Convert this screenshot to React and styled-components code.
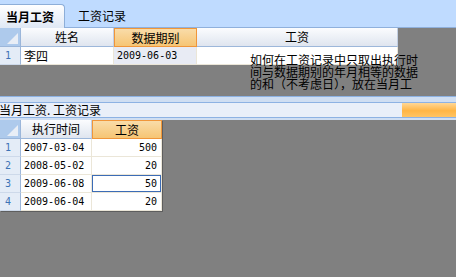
import React from "react";
import styled, { createGlobalStyle, css } from "styled-components";

const Global = createGlobalStyle`
  html, body { margin: 0; padding: 0; background: #808080; }
  body {
    font-family: "Noto Sans CJK SC", "Noto Sans", sans-serif;
    font-size: 12px;
    color: #000;
    width: 456px;
    height: 277px;
    overflow: hidden;
  }
`;

const Page = styled.div`
  position: relative;
  width: 456px;
  height: 277px;
  display: flex;
  flex-direction: column;
`;

const TabBar = styled.div`
  height: 23px;
  padding-top: 4px;
  background: #bfdbff;
  border-bottom: 1px solid #8fb0dc;
  display: flex;
  align-items: flex-end;
`;

const Tab = styled.div`
  height: 23px;
  box-sizing: border-box;
  display: flex;
  align-items: center;
  line-height: 12px;
  white-space: nowrap;
  ${(p) =>
    p.$active
      ? css`
          width: 65px;
          padding-left: 6px;
          font-weight: bold;
          background: linear-gradient(#ffffff, #dfe8f5);
          border: 1px solid #8daed8;
          border-left: none;
          border-bottom: none;
          border-top-right-radius: 4px;
          margin-bottom: -1px;
          height: 24px;
        `
      : css`
          padding-left: 13px;
        `}
`;

const Grid = styled.div`
  display: grid;
  grid-template-columns: ${(p) => p.$cols};
  width: max-content;
  background: #fff;
  ${(p) =>
    p.$shadow &&
    css`
      box-shadow: 1px 1px 0 #5e5e5e;
    `}
`;

const Corner = styled.div`
  height: 19px;
  box-sizing: border-box;
  background: #aecaec;
  border-right: 1px solid #9bb6da;
  border-bottom: 1px solid #9bb6da;
  display: flex;
  align-items: flex-end;
  justify-content: flex-end;
  padding: 0 2px 2px 0;
`;

const HeadCell = styled.div`
  height: 19px;
  box-sizing: border-box;
  display: flex;
  align-items: center;
  justify-content: center;
  line-height: 12px;
  white-space: nowrap;
  ${(p) =>
    p.$active
      ? css`
          background: linear-gradient(#f9dca9, #f6c574);
          border: 1px solid #f0963a;
        `
      : css`
          background: linear-gradient(#fbfcfe, #dfe5ef);
          border-right: 1px solid #c3cfe2;
          border-bottom: 1px solid #9db7da;
        `}
`;

const RowHead = styled.div`
  height: 18px;
  box-sizing: border-box;
  background: #e4ecf7;
  color: #3c73b6;
  border-right: 1px solid #9db7da;
  border-bottom: 1px solid #cdd9ea;
  font-family: "DejaVu Sans Mono", monospace;
  font-size: 10px;
  display: flex;
  align-items: center;
  padding-left: 5px;
`;

const Cell = styled.div`
  height: 18px;
  box-sizing: border-box;
  border-right: 1px solid #ebe6d8;
  border-bottom: 1px solid #ebe6d8;
  display: flex;
  align-items: center;
  white-space: nowrap;
  line-height: 12px;
  padding: 0 4px 0 3px;
  background: ${(p) => (p.$tint ? "#e8ebf4" : "#fff")};
  justify-content: ${(p) => (p.$right ? "flex-end" : "flex-start")};
  ${(p) =>
    p.$mono &&
    css`
      font-family: "DejaVu Sans Mono", monospace;
      font-size: 10px;
    `}
  ${(p) =>
    p.$selected &&
    css`
      box-shadow: inset 0 0 0 1px #3c6cb6;
    `}
`;

const Gap = styled.div`
  height: ${(p) => p.$h}px;
  flex: none;
`;

const SubBar = styled.div`
  border-top: 1px solid #8db2e3;
  background: #cfdef2;
  padding: 5px 0 2px;
`;

const SubPanel = styled.div`
  height: 14px;
  border-top: 1px solid #8db2e3;
  border-bottom: 1px solid #8db2e3;
  background: #e9eff9;
  display: flex;
  align-items: center;
  justify-content: space-between;
`;

const SubTitle = styled.div`
  margin-left: -1px;
  line-height: 12px;
  white-space: nowrap;
`;

const OrangeTab = styled.div`
  width: 54px;
  height: 14px;
  background: linear-gradient(#ffd796, #ffb544 55%, #ffc463);
`;

const Note = styled.div`
  position: absolute;
  left: 250px;
  top: 54px;
  line-height: 12px;
  font-size: 12px;
  color: #000;
`;

const NoteLine = styled.div`
  white-space: nowrap;
  height: 12px;
`;

const CornerMark = () => (
  <svg width="11" height="11" viewBox="0 0 11 11">
    <polygon points="11,0 11,11 0,11" fill="#e9eef6" />
  </svg>
);

const rows2 = [
  ["2007-03-04", "500"],
  ["2008-05-02", "20"],
  ["2009-06-08", "50"],
  ["2009-06-04", "20"],
];

export default function App() {
  return (
    <>
      <Global />
      <Page>
        <TabBar>
          <Tab $active>当月工资</Tab>
          <Tab>工资记录</Tab>
        </TabBar>
        <Grid $cols="21px 93px 83px 201px">
          <Corner>
            <CornerMark />
          </Corner>
          <HeadCell>姓名</HeadCell>
          <HeadCell $active>数据期别</HeadCell>
          <HeadCell>工资</HeadCell>
          <RowHead>1</RowHead>
          <Cell>李四</Cell>
          <Cell $tint $mono>
            2009-06-03
          </Cell>
          <Cell />
        </Grid>
        <Gap $h={31} />
        <SubBar>
          <SubPanel>
            <SubTitle>当月工资. 工资记录</SubTitle>
            <OrangeTab />
          </SubPanel>
        </SubBar>
        <Grid $cols="21px 71px 70px" $shadow>
          <Corner>
            <CornerMark />
          </Corner>
          <HeadCell>执行时间</HeadCell>
          <HeadCell $active>工资</HeadCell>
          {rows2.map(([d, v], i) => (
            <React.Fragment key={i}>
              <RowHead>{i + 1}</RowHead>
              <Cell $mono>{d}</Cell>
              <Cell $mono $right $selected={i === 2}>
                {v}
              </Cell>
            </React.Fragment>
          ))}
        </Grid>
        <Note>
          <NoteLine>如何在工资记录中只取出执行时</NoteLine>
          <NoteLine>间与数据期别的年月相等的数据</NoteLine>
          <NoteLine>的和（不考虑日），放在当月工</NoteLine>
        </Note>
      </Page>
    </>
  );
}
